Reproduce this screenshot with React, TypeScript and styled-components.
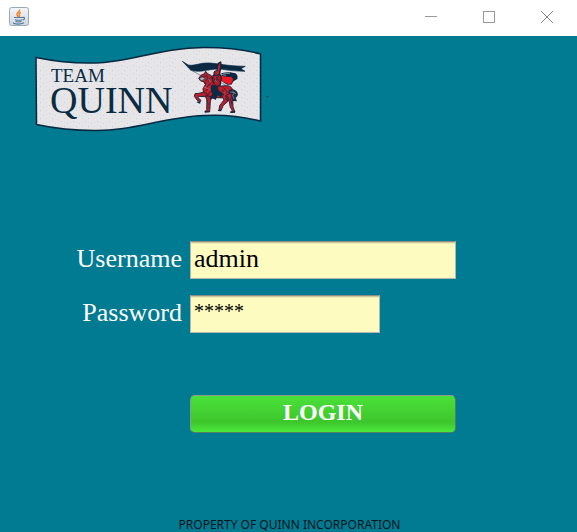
import React, { useState } from "react";
import styled, { createGlobalStyle } from "styled-components";

const GlobalStyle = createGlobalStyle`
  * { box-sizing: border-box; }
  body { margin: 0; background: #007b92; }
`;

const Window = styled.div`
  min-height: 100vh;
  display: flex;
  flex-direction: column;
  background: #007b92;
  font-family: Constantia, "Liberation Serif", serif;
`;

const TitleBar = styled.header`
  height: 36px;
  display: flex;
  align-items: flex-start;
  justify-content: space-between;
  padding: 0 1px 0 9px;
  background: #fff;
`;

const AppIcon = styled.svg`
  display: block;
  margin-top: 7px;
`;

const WindowControls = styled.div`
  display: flex;
`;

const ControlButton = styled.button`
  width: 58px;
  height: 34px;
  display: grid;
  place-items: center;
  padding: 0;
  border: 0;
  background: transparent;
  &:hover { background: #e5e5e5; }
`;

const Content = styled.main`
  flex: 1;
  display: flex;
  flex-direction: column;
  padding: 8px 0 0;
`;

const Logo = styled.svg`
  display: block;
  flex: none;
  margin-left: 34px;
`;

const LoginForm = styled.form`
  display: grid;
  grid-template-columns: 182px minmax(0, 266px);
  column-gap: 8px;
  row-gap: 16px;
  margin-top: 107px;
  padding-right: 16px;
`;

const FieldLabel = styled.label`
  align-self: start;
  justify-self: end;
  color: #fff;
  font-size: 26px;
  line-height: 36px;
`;

const Field = styled.input<{ $masked?: boolean }>`
  width: ${({ $masked }) => ($masked ? "190px" : "100%")};
  max-width: 100%;
  height: 38px;
  padding: ${({ $masked }) => ($masked ? "0 3px 6px" : "0 3px 2px")};
  border: 1px solid #b4b6b2;
  border-top-color: #8e9086;
  border-radius: 0;
  outline: 0;
  background: linear-gradient(#ccc89c 0 1px, #efebb2 1px 2px, #fefbc0 2px);
  color: #000;
  font-family: inherit;
  font-size: ${({ $masked }) => ($masked ? "20px" : "26px")};
`;

const LoginButton = styled.button`
  grid-column: 2;
  height: 38px;
  margin-top: 46px;
  padding: 0 0 4px;
  border: 1px solid #547d62;
  border-top-color: #8a9c8c;
  border-left-color: #8a9c8c;
  border-radius: 5px;
  background: linear-gradient(#4be13a, #3dc62c 72%, #4ce83b);
  color: #fff;
  font-family: inherit;
  font-size: 24px;
  font-weight: 700;
  line-height: 30px;
`;

const Footer = styled.footer`
  margin-top: auto;
  padding-left: 2px;
  text-align: center;
  color: #04151b;
  font-family: Tahoma, "Noto Sans", sans-serif;
  font-size: 12px;
  line-height: 14px;
`;

function JavaIcon() {
  return (
    <AppIcon width="20" height="20" viewBox="0 0 20 20" aria-hidden="true">
      <defs>
        <linearGradient id="tile" x1="0" y1="0" x2="0" y2="1">
          <stop offset="0" stopColor="#f3f6f8" />
          <stop offset="1" stopColor="#cdd8e0" />
        </linearGradient>
      </defs>
      <rect x=".5" y=".5" width="19" height="18" rx="2" fill="url(#tile)" stroke="#9aa9b6" />
      <path d="M10.500 2.500c1 2-3 3-2.500 5 .2 1 1 1.500 1.200 2.500M12 5.500c-2 1-2.500 1.800-1.500 3 .4.600 0 1.200-.6 1.700" fill="none" stroke="#ee8734" strokeWidth="1.500" />
      <path d="M5 10.500h8.500M6 12.700c2 .7 5 .7 7 0M6.500 14.500c2 .6 4 .6 6 0M13.500 10.500c3-.6 2.500 2 0 2.500" fill="none" stroke="#53789b" strokeWidth="1.100" />
      <path d="M4 16c3 1.300 8 1.200 11-.2" fill="none" stroke="#53789b" strokeWidth="1.200" />
    </AppIcon>
  );
}

function Knight() {
  return (
    <g transform="translate(180 50) scale(.33333)" strokeLinejoin="round">
      <path d="M28 58L64 77M118 96l28 14" stroke="#8a8f9b" strokeWidth="3" />
      <path d="M7 34l18 11c12 3 24-2 42-5 18-2 30-1 48 2 22 3 44 6 81 7l-13 7 12 8c-24-1-46-2-68-6-20-3-38 2-60 5-15 2-30 1-37-5z" fill="#0b2942" stroke="#0b2942" strokeWidth="2" />
      <path d="M124 70c12-4 22-4 34-2 12 0 17 9 14 19-5 4-13 4-16 16-10 4-20 0-32-11z" fill="#0b2942" />
      <path d="M122 77c12 0 18 6 32 3l5 8c-1 7-5 11-9 17-9-5-18-10-30-13z" fill="#f01823" />
      <path d="M130 70l20 0M122 73l16 3" stroke="#c5c5cd" strokeWidth="2" />
      <path d="M115 40l7-4 1 8-4 27 5 13-4 23-13 6-10-24 2-12 12-6z" fill="#b51c29" stroke="#172236" strokeWidth="4" />
      <path d="M102 66l9-6 8 7-5 9-12 0z" fill="#a32231" stroke="#13233a" strokeWidth="3" />
      <path d="M62 93l-6-8 7-9 10-5 4-7 6 7 11 6 5 20 12 12 28-2c13 0 20 7 19 19-1 11-8 16-19 18l-28-1-27 3-13-13-2-17 8-14-5-7z" fill="#c21c29" stroke="#272335" strokeWidth="3" />
      <path d="M72 126l-15 4-12 1-2 8 8 11 9 6 3-5-9-8 2-4 19 1 11-5zM76 137l5 15-1 27-5 6h14l2-30 4-15z" fill="#b91e2b" stroke="#2c2838" strokeWidth="3" />
      <path d="M124 132l8 18-13 17-2 12 7 1 5-13 15-13 2-12zM136 137l12 18 3 17 6 9-5 5h13l-6-15-1-25-5-17z" fill="#c31d2a" stroke="#2c2838" strokeWidth="3" />
      <path d="M145 122c8-7 19-5 25 2 6 8 4 16-3 19l4 11-13-1-5-12 5-7-11-4z" fill="#1b2942" />
      <path d="M150 126l14 2-6 8 4 11M157 123l11 9" fill="none" stroke="#99939d" strokeWidth="2" />
      <path d="M96 103l16 6 4 12 13 9-6 12-10-6-6 14-9-6-10 3 9-15-6-15z" fill="#0d2944" />
      <path d="M64 79l10 2 7-6M63 91l12-4M79 75l5 11-8 7M92 82l-8 14-8 8M97 95l-17 18" fill="none" stroke="#35303f" strokeWidth="3" />
      <path d="M60 83l8-2 8 5-10 6-6-2z" fill="#aeb0b8" stroke="#39404e" strokeWidth="2" />
      <path d="M78 112l10-8M78 122l12-8M85 132l8-8M126 120l15 10M130 113l16 14M126 130l8 7M109 81l11 15M118 76l-11 18M151 145l5 18M80 150l5 14M135 146l10 7M101 85l5 8M71 98l9 7" stroke="#30263a" strokeWidth="3" />
      <path d="M70 111l23 7M86 87l6 10M105 90l5 6M115 48l4 3M132 126l5 1" stroke="#c7a3ac" strokeWidth="1.500" />
      <path d="M83 97l-4 13M88 108l-5 20M116 52l-3 21M138 118l8 5M137 131l-7 12" stroke="#e42a31" strokeWidth="3" />
      <path d="M74 186l15-1M114 181l10 1M151 187l14-1M52 156l9 3" stroke="#0d2944" strokeWidth="4" />
    </g>
  );
}

function TeamLogo() {
  return (
    <Logo width="236" height="90" viewBox="34 44 236 90" role="img" aria-label="Team Quinn">
      <defs>
        <pattern id="speckle" width="12" height="8" patternUnits="userSpaceOnUse">
          <rect width="12" height="8" fill="#e6e6e8" />
          <path d="M1 1h1v1h-1zM7 3h1v1h-1zM4 6h1v1h-1z" fill="#d0cbea" />
          <path d="M10 6h1v1h-1zM4 2h1v1h-1z" fill="#ead5d8" />
          <path d="M10 1h1v1h-1zM1 4h1v1h-1z" fill="#dce5dc" />
        </pattern>
      </defs>
      <path d="M36 57.500C58 62 82 64 104 62.500C136 60 163 48 204 47.500C225 47.500 244 49.500 260.500 54V121C241 116 222 114.500 204 115.500C162 117.500 132 131 95 130.500C75 130.500 55 128.500 36.500 124.500Z" fill="url(#speckle)" stroke="#062940" strokeWidth="1.500" />
      <g fill="#0b2b43" fontFamily='"Liberation Serif", serif'>
        <text x="51" y="82" fontSize="19">TEAM</text>
        <text x="50" y="113" fontSize="38">QUINN</text>
      </g>
      <Knight />
      <rect x="267" y="96" width="1" height="1" fill="#000" />
    </Logo>
  );
}

export default function App() {
  const [username, setUsername] = useState("admin");
  const [password, setPassword] = useState("*****");

  return (
    <Window>
      <GlobalStyle />
      <TitleBar>
        <JavaIcon />
        <WindowControls>
          <ControlButton type="button" aria-label="Minimize">
            <svg width="12" height="12"><path d="M0 5.500h12" stroke="#999" /></svg>
          </ControlButton>
          <ControlButton type="button" aria-label="Maximize">
            <svg width="12" height="12"><rect x=".5" y=".5" width="11" height="11" fill="none" stroke="#999" /></svg>
          </ControlButton>
          <ControlButton type="button" aria-label="Close">
            <svg width="12" height="12"><path d="M0 0l12 12M12 0L0 12" stroke="#888" /></svg>
          </ControlButton>
        </WindowControls>
      </TitleBar>
      <Content>
        <TeamLogo />
        <LoginForm onSubmit={(event) => event.preventDefault()}>
          <FieldLabel htmlFor="username">Username</FieldLabel>
          <Field id="username" value={username} onChange={(event) => setUsername(event.target.value)} />
          <FieldLabel htmlFor="password">Password</FieldLabel>
          <Field id="password" $masked value={password} onChange={(event) => setPassword(event.target.value)} />
          <LoginButton type="submit">LOGIN</LoginButton>
        </LoginForm>
        <Footer>PROPERTY OF QUINN INCORPORATION</Footer>
      </Content>
    </Window>
  );
}
